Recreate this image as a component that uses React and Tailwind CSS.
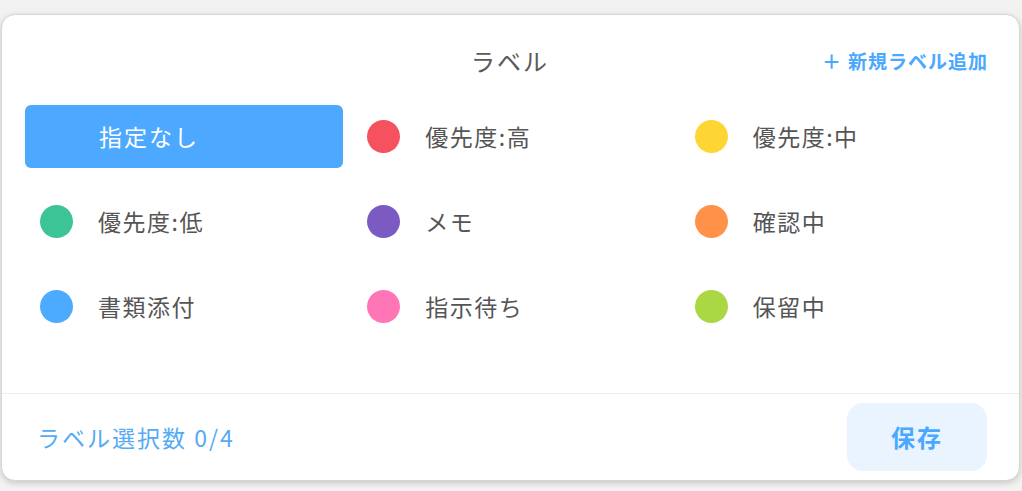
import React, { useState } from "react";

const labels = [
  { name: "優先度:高", color: "bg-[#f5515f]" },
  { name: "優先度:中", color: "bg-[#fed633]" },
  { name: "優先度:低", color: "bg-[#3cc497]" },
  { name: "メモ", color: "bg-[#7b5bc2]" },
  { name: "確認中", color: "bg-[#ff9248]" },
  { name: "書類添付", color: "bg-[#4caaff]" },
  { name: "指示待ち", color: "bg-[#ff76b6]" },
  { name: "保留中", color: "bg-[#a9d844]" },
];

const font = { fontFamily: "'Noto Sans CJK JP', 'Noto Sans', sans-serif" };

const App = () => {
  const [selected, setSelected] = useState([]);

  const toggle = (name) => {
    setSelected((s) =>
      s.includes(name) ? s.filter((n) => n !== name) : s.length < 4 ? [...s, name] : s
    );
  };

  return (
    <div className="w-[1022px] h-[491px] bg-[#f2f2f2] pt-[14px] pl-[1px] pr-[2px] pb-[10px]" style={font}>
      <div className="h-full flex flex-col bg-white border border-[#d6d6d6] rounded-[14px] shadow-[0_2px_6px_rgba(0,0,0,0.18)] overflow-hidden">
        {/* Header */}
        <div className="h-[90px] pt-[30px] pl-[30px] pr-[31px] grid grid-cols-[1fr_auto_1fr] items-start">
          <div />
          <h1 className="text-[24px] leading-[32px] tracking-[2px] text-[#5a5a5a]">ラベル</h1>
          <button className="justify-self-end flex items-center text-[19px] leading-[32px] font-bold tracking-[1px] text-[#4aa8ff]">
            <span className="mr-[6px]">＋</span>
            新規ラベル追加
          </button>
        </div>

        {/* Labels */}
        <div className="grid grid-cols-3 gap-x-[9px] gap-y-[22px] pl-[23px] pr-[21px]">
          <button
            onClick={() => setSelected([])}
            className="h-[63px] rounded-[6px] bg-[#4da9ff] text-white text-[23px] tracking-[2px] text-left pl-[74px]"
          >
            指定なし
          </button>
          {labels.map((l) => (
            <button
              key={l.name}
              onClick={() => toggle(l.name)}
              className="h-[63px] flex items-center pl-[15px] gap-[25px] text-[23px] tracking-[1.5px] text-[#555]"
            >
              <span className={`w-[33px] h-[33px] rounded-full shrink-0 ${l.color}`} />
              <span>{l.name}</span>
            </button>
          ))}
        </div>

        <div className="flex-1" />

        {/* Footer */}
        <div className="h-[87px] border-t border-[#ececec] flex items-center justify-between pl-[35px] pr-[32px]">
          <span className="text-[23px] tracking-[2px] text-[#55aaf6]">ラベル選択数 {selected.length}/4</span>
          <button className="w-[140px] h-[68px] rounded-[16px] bg-[#eaf4ff] text-[24px] font-bold tracking-[2px] text-[#4aa8ff]">
            保存
          </button>
        </div>
      </div>
    </div>
  );
};

export default App;
